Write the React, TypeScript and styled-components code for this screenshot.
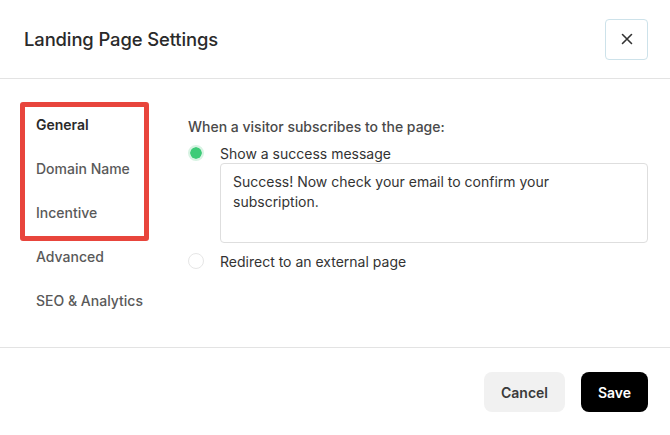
import React from "react";
import styled, { createGlobalStyle } from "styled-components";

const Global = createGlobalStyle`
  html, body { margin: 0; padding: 0; background: #ffffff; }
  body { font-family: Inter, "Noto Sans", sans-serif; -webkit-font-smoothing: antialiased; }
  * { box-sizing: border-box; }
`;

const Dialog = styled.div`
  width: 670px;
  height: 435px;
  background: #ffffff;
  display: flex;
  flex-direction: column;
`;

const Header = styled.header`
  height: 79px;
  flex: none;
  display: flex;
  align-items: center;
  justify-content: space-between;
  padding: 0 22px 0 24px;
  border-bottom: 1px solid #e3e3e3;
`;

const Title = styled.h1`
  margin: 0;
  font-size: 18.4px;
  font-weight: 500;
  color: #2a2a2a;
  letter-spacing: -0.1px;
`;

const CloseButton = styled.button`
  width: 43px;
  height: 41px;
  border: 1.5px solid #cde2ea;
  border-radius: 4px;
  background: #fff;
  display: flex;
  align-items: center;
  justify-content: center;
  padding: 0;
  color: #333;
`;

const Body = styled.div`
  flex: 1;
  display: flex;
  border-bottom: 1px solid #e3e3e3;
`;

const Sidebar = styled.nav`
  position: relative;
  width: 188px;
  flex: none;
  padding: 24px 0 0 36px;
  display: flex;
  flex-direction: column;
`;

const NavItem = styled.div<{ $active?: boolean }>`
  height: 44px;
  line-height: 44px;
  font-size: 14px;
  font-weight: ${(p) => (p.$active ? 600 : 500)};
  color: ${(p) => (p.$active ? "#2a2a2a" : "#595959")};
`;

const Highlight = styled.div`
  position: absolute;
  left: 20px;
  top: 23px;
  width: 129px;
  height: 139px;
  border: 5px solid #e8453c;
  border-radius: 3px;
  pointer-events: none;
`;

const Content = styled.section`
  flex: 1;
  padding: 38px 22px 0 0;
  display: flex;
  flex-direction: column;
`;

const Question = styled.div`
  font-size: 14px;
  line-height: 20px;
  font-weight: 500;
  color: #4a4a4a;
`;

const OptionRow = styled.label<{ $gap?: number }>`
  display: flex;
  align-items: center;
  height: 20px;
  margin-top: ${(p) => p.$gap ?? 0}px;
  font-size: 14px;
  color: #333;
`;

const Radio = styled.span<{ $checked?: boolean }>`
  width: 16px;
  height: 16px;
  border-radius: 50%;
  margin-right: 16px;
  flex: none;
  background: ${(p) => (p.$checked ? "#3ecb78" : "#fff")};
  border: ${(p) => (p.$checked ? "2px solid #d8f3e3" : "1.5px solid #e6e6e6")};
  background-clip: padding-box;
`;

const MessageBox = styled.div`
  margin-left: 32px;
  height: 80px;
  border: 1px solid #dedede;
  border-radius: 4px;
  padding: 8px 12px;
  font-size: 14px;
  line-height: 20px;
  color: #333;
`;

const Footer = styled.footer`
  height: 87px;
  flex: none;
  display: flex;
  justify-content: flex-end;
  align-items: flex-start;
  gap: 16px;
  padding: 24px 22px 0 0;
`;

const Button = styled.button<{ $primary?: boolean }>`
  height: 40px;
  width: ${(p) => (p.$primary ? 67 : 81)}px;
  padding: 0;
  border: none;
  border-radius: 8px;
  font-family: Inter, "Noto Sans", sans-serif;
  font-size: 14px;
  font-weight: 600;
  background: ${(p) => (p.$primary ? "#000" : "#f1f1f1")};
  color: ${(p) => (p.$primary ? "#fff" : "#3a3a3a")};
`;

export default function App() {
  return (
    <>
      <Global />
      <Dialog>
        <Header>
          <Title>Landing Page Settings</Title>
          <CloseButton aria-label="Close">
            <svg width="12" height="12" viewBox="0 0 12 12" fill="none" stroke="#333" strokeWidth="1.6" strokeLinecap="round">
              <path d="M1.5 1.5 L10.5 10.5 M10.5 1.5 L1.5 10.5" />
            </svg>
          </CloseButton>
        </Header>
        <Body>
          <Sidebar>
            <NavItem $active>General</NavItem>
            <NavItem>Domain Name</NavItem>
            <NavItem>Incentive</NavItem>
            <NavItem>Advanced</NavItem>
            <NavItem>SEO &amp; Analytics</NavItem>
            <Highlight />
          </Sidebar>
          <Content>
            <Question>When a visitor subscribes to the page:</Question>
            <OptionRow $gap={6}>
              <Radio $checked />
              Show a success message
            </OptionRow>
            <MessageBox>
              Success! Now check your email to confirm your
              <br />
              subscription.
            </MessageBox>
            <OptionRow $gap={8}>
              <Radio />
              Redirect to an external page
            </OptionRow>
          </Content>
        </Body>
        <Footer>
          <Button>Cancel</Button>
          <Button $primary>Save</Button>
        </Footer>
      </Dialog>
    </>
  );
}
